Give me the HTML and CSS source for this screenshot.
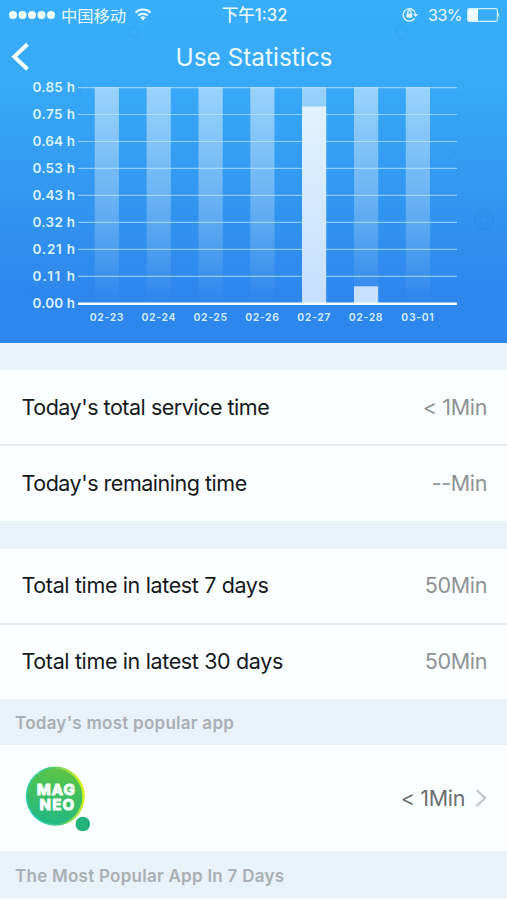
FILE: index.html
```html
<!DOCTYPE html>
<html lang="en">
<head>
    <meta charset="UTF-8">
    <meta name="viewport" content="width=device-width, initial-scale=1.0">
    <title>Use Statistics</title>
    <link rel="stylesheet" href="styles.css">
</head>
<body>
    <div class="hero">
        <svg class="hero-pattern" width="507" height="343" viewBox="0 0 507 343">
            <circle cx="134" cy="32" r="5"/>
            <circle cx="402" cy="32" r="6"/>
            <circle cx="484" cy="220" r="9"/>
            <circle cx="484" cy="220" r="4"/>
            <path d="M81 84v14M28 295h8M448 160l8-9"/>
        </svg>

        <div class="status-bar">
            <div class="status-left">
                <svg width="46" height="10" viewBox="0 0 46 10" fill="#f0ffff">
                    <circle cx="4" cy="5" r="4"/>
                    <circle cx="13.5" cy="5" r="4"/>
                    <circle cx="23" cy="5" r="4"/>
                    <circle cx="32.5" cy="5" r="4"/>
                    <circle cx="42" cy="5" r="4"/>
                </svg>
                <span class="carrier">中国移动</span>
                <svg class="wifi" width="18" height="13" viewBox="0 0 18 13">
                    <path d="M1.5 4.6a10.8 10.8 0 0 1 15 0M4.2 7.6a7 7 0 0 1 9.6 0"/>
                    <path class="solid" d="M9 12.4L6.2 9.6a4 4 0 0 1 5.6 0z"/>
                </svg>
            </div>
            <div class="status-time">下午1:32</div>
            <div class="status-right">
                <svg class="lock" width="17" height="15" viewBox="0 0 17 15">
                    <path d="M12.6 11.4A6.2 6.2 0 1 1 13.6 7.5"/>
                    <path class="solid" d="M11.2 7.1h5l-2.5 2.8z"/>
                    <path class="solid" d="M4.5 6.6h5.8v4H4.5z"/>
                    <path d="M5.8 7V5.3a1.6 1.6 0 0 1 3.2 0V7"/>
                </svg>
                <span class="percent">33%</span>
                <svg width="33" height="14" viewBox="0 0 33 14">
                    <rect x=".6" y=".6" width="29.8" height="12.8" rx="1.6" fill="none" stroke="#d5f3ff" stroke-width="1.1"/>
                    <rect x="1.2" y="1.2" width="9.8" height="11.6" fill="#f4ffff"/>
                    <path d="M31.2 4.5q2 2.5 0 5z" fill="#d5f3ff"/>
                </svg>
            </div>
        </div>

        <div class="nav-bar">
            <svg class="back" width="20" height="30" viewBox="0 0 20 30">
                <path d="M17.5 2.2L4.2 14.7l13.3 12.5"/>
            </svg>
            <h1>Use Statistics</h1>
        </div>

        <svg class="chart" width="507" height="263" viewBox="0 80 507 263">
            <defs>
                <linearGradient id="track" x1="0" y1="0" x2="0" y2="1">
                    <stop offset="0" stop-color="#fff" stop-opacity=".49"/>
                    <stop offset=".5" stop-color="#fff" stop-opacity=".28"/>
                    <stop offset="1" stop-color="#fff" stop-opacity="0"/>
                </linearGradient>
                <linearGradient id="value" gradientUnits="userSpaceOnUse" x1="0" y1="106" x2="0" y2="303">
                    <stop offset="0" stop-color="#e2f3ff"/>
                    <stop offset="1" stop-color="#c6dffc"/>
                </linearGradient>
            </defs>
            <g fill="url(#track)">
                <rect x="94.7" y="87" width="24.2" height="216"/>
                <rect x="146.6" y="87" width="24.2" height="216"/>
                <rect x="198.5" y="87" width="24.2" height="216"/>
                <rect x="250.3" y="87" width="24.2" height="216"/>
                <rect x="302" y="87" width="24.2" height="216"/>
                <rect x="354" y="87" width="24.2" height="216"/>
                <rect x="405.8" y="87" width="24.2" height="216"/>
            </g>
            <path class="grid" d="M78 87.6h379M78 114.5h379M78 141.5h379M78 168.4h379M78 195.4h379M78 222.4h379M78 249.4h379M78 276.3h379"/>
            <g fill="url(#value)">
                <rect x="302" y="106.5" width="24.2" height="197"/>
                <rect x="354" y="286.3" width="24.2" height="17"/>
            </g>
            <path class="axis" d="M78 303.8h379"/>
            <g class="y-labels">
                <text x="32.5" y="92" textLength="42.5">0.85 h</text>
                <text x="32.5" y="119" textLength="42.5">0.75 h</text>
                <text x="32.5" y="146" textLength="42.5">0.64 h</text>
                <text x="32.5" y="173" textLength="42.5">0.53 h</text>
                <text x="32.5" y="200" textLength="42.5">0.43 h</text>
                <text x="32.5" y="227" textLength="42.5">0.32 h</text>
                <text x="32.5" y="254" textLength="42.5">0.21 h</text>
                <text x="32.5" y="281" textLength="42.5">0.11 h</text>
                <text x="32.5" y="308" textLength="42.5">0.00 h</text>
            </g>
            <g class="x-labels">
                <text x="107" y="320.5">02-23</text>
                <text x="158.8" y="320.5">02-24</text>
                <text x="210.6" y="320.5">02-25</text>
                <text x="262.4" y="320.5">02-26</text>
                <text x="314.2" y="320.5">02-27</text>
                <text x="366" y="320.5">02-28</text>
                <text x="417.8" y="320.5">03-01</text>
            </g>
        </svg>
    </div>

    <div class="group today-times">
        <div class="row">
            <span class="label">Today's total service time</span>
            <span class="value">&lt; 1Min</span>
        </div>
        <div class="row">
            <span class="label">Today's remaining time</span>
            <span class="value">--Min</span>
        </div>
    </div>

    <div class="group total-times">
        <div class="row">
            <span class="label">Total time in latest 7 days</span>
            <span class="value">50Min</span>
        </div>
        <div class="row">
            <span class="label">Total time in latest 30 days</span>
            <span class="value">50Min</span>
        </div>
    </div>

    <h2 class="section-title">Today's most popular app</h2>
    <div class="app-row">
        <svg class="app-icon" width="70" height="70" viewBox="0 0 70 70">
            <defs>
                <linearGradient id="ring" x1="0" y1=".6" x2="1" y2=".4">
                    <stop offset="0" stop-color="#35d5dc"/>
                    <stop offset=".5" stop-color="#42c878"/>
                    <stop offset="1" stop-color="#e5f51c"/>
                </linearGradient>
                <linearGradient id="ball" x1=".6" y1="0" x2=".4" y2="1">
                    <stop offset="0" stop-color="#5cc544"/>
                    <stop offset="1" stop-color="#20b984"/>
                </linearGradient>
            </defs>
            <circle cx="32.3" cy="32.2" r="29.6" fill="url(#ring)"/>
            <circle cx="31.6" cy="32.4" r="27.8" fill="url(#ball)"/>
            <circle cx="59.8" cy="60" r="7.3" fill="#25b47b"/>
            <text x="13.8" y="31.4" textLength="38">MAG</text>
            <text x="16.5" y="46" textLength="34.5">NEO</text>
        </svg>
        <span class="app-time">&lt; 1Min</span>
        <svg class="chevron" width="12" height="20" viewBox="0 0 12 20">
            <path d="M1.5 2l8.6 8-8.6 8"/>
        </svg>
    </div>
    <h2 class="section-title week">The Most Popular App In 7 Days</h2>
</body>
</html>
```
FILE: styles.css
```css
* {
    box-sizing: border-box;
}
body {
    margin: 0;
    height: 900px;
    overflow: hidden;
    background: #fafeff;
    color: #15191b;
    font-family: Inter, "Noto Sans CJK SC", sans-serif;
}
h1, h2 {
    margin: 0;
}
svg {
    display: block;
    flex-shrink: 0;
}

/* blue header */
.hero {
    position: relative;
    height: 343px;
    background: linear-gradient(#38aefa, #37a9f7 25%, #3195f0 60%, #2e87ed 85%, #2e87ee);
    color: #e8faff;
}
.hero-pattern {
    position: absolute;
    inset: 0;
    fill: none;
    stroke: rgba(20, 90, 180, 0.05);
    stroke-width: 3;
}
.status-bar {
    position: relative;
    display: grid;
    grid-template-columns: 1fr auto 1fr;
    align-items: center;
    height: 30px;
    padding: 0 7px 1px 9px;
    font-size: 16px;
}
.status-left,
.status-right {
    display: flex;
    align-items: center;
}
.carrier {
    margin: 0 8px 0 6px;
    font-size: 16.3px;
}
.wifi {
    fill: none;
    stroke: #e8faff;
    stroke-width: 2;
}
.solid {
    fill: #e8faff;
    stroke: none;
}
.status-time {
    padding-bottom: 1px;
    font-weight: 500;
    font-size: 16.6px;
}
.status-right {
    justify-content: flex-end;
}
.lock {
    fill: none;
    stroke: #e8faff;
    stroke-width: 1.3;
}
.percent {
    margin: 0 5px 0 9px;
    letter-spacing: -0.5px;
}
.nav-bar {
    position: relative;
    display: grid;
    grid-template-columns: 1fr auto 1fr;
    align-items: center;
    height: 50px;
    padding: 4px 0 0 10px;
}
.nav-bar h1 {
    padding-right: 9px;
    font-size: 24.4px;
    font-weight: 400;
    line-height: 46px;
}
.back {
    fill: none;
    stroke: #f4feff;
    stroke-width: 4;
}
.chart {
    position: relative;
    font-family: Inter, sans-serif;
}
.grid {
    stroke: rgba(190, 232, 255, 0.65);
    stroke-width: 1.2;
}
.axis {
    stroke: #f5ffff;
    stroke-width: 2.6;
}
.y-labels {
    fill: #d9f4ff;
    font-size: 13.5px;
    font-weight: 600;
}
.x-labels {
    fill: #d3eeff;
    font-size: 10.5px;
    font-weight: 600;
    letter-spacing: 0.6px;
    text-anchor: middle;
}

/* time rows */
.group {
    border-top: 27px solid #e9f1f9;
}
.total-times {
    border-top-width: 28px;
}
.row {
    display: flex;
    align-items: center;
    justify-content: space-between;
    height: 74px;
    padding: 0 20px 0 21.5px;
    font-size: 21.5px;
}
.row + .row {
    height: 76px;
    padding-bottom: 2px;
    border-top: 2px solid #e6ebed;
}
.today-times .row + .row {
    height: 77px;
}
.total-times .row {
    padding-bottom: 2px;
}
.today-times .label {
    letter-spacing: -0.48px;
}
.total-times .label {
    letter-spacing: -0.36px;
}
.value,
.app-time {
    letter-spacing: -0.35px;
}
.value {
    color: #8e9294;
}

/* most popular apps */
.section-title {
    display: flex;
    align-items: center;
    height: 46px;
    padding: 2px 15px 0;
    background: #e9f1f9;
    color: #a9afb4;
    font-size: 17px;
    font-weight: 600;
    letter-spacing: 0.26px;
}
.week {
    height: 47px;
}
.app-row {
    display: flex;
    align-items: center;
    height: 106px;
    padding: 0 20px 0 23px;
}
.app-icon {
    margin-top: 2px;
}
.app-icon text {
    fill: #f5fff9;
    stroke: #f5fff9;
    stroke-width: 1.1;
    stroke-linejoin: round;
    font-size: 15px;
    font-weight: 700;
}
.app-time {
    margin-left: auto;
    color: #6b6e70;
    font-size: 21.5px;
}
.chevron {
    margin-left: 10px;
    fill: none;
    stroke: #c3c6cb;
    stroke-width: 2.2;
}
```
